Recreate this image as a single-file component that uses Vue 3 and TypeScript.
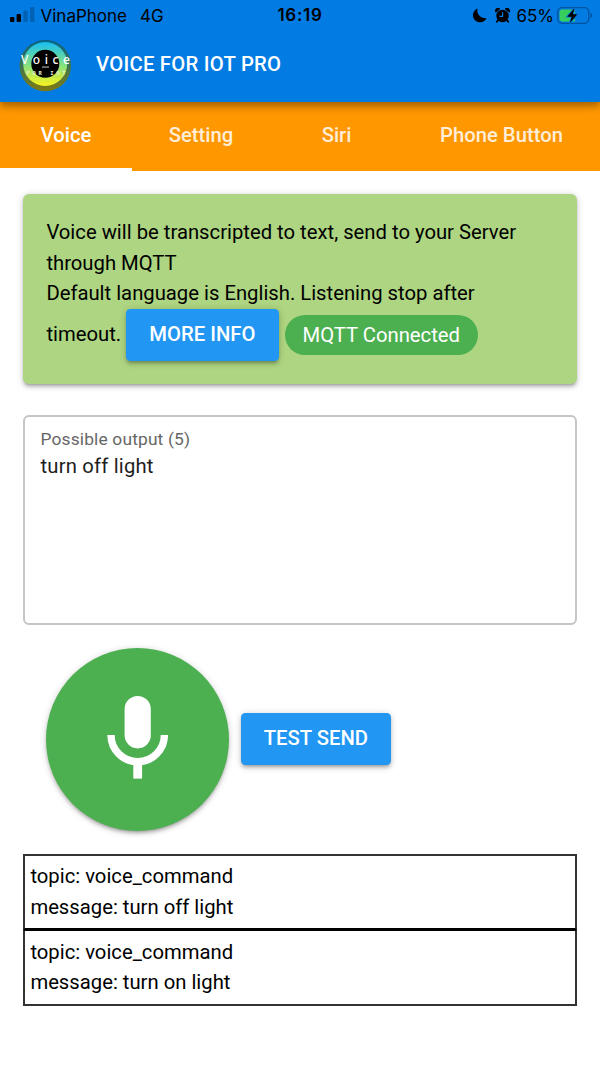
<script setup lang="ts">
import { ref } from 'vue'

interface Tab { id: string; label: string }
interface Message { topic: string; message: string }

const tabs: Tab[] = [
  { id: 'voice', label: 'Voice' },
  { id: 'setting', label: 'Setting' },
  { id: 'siri', label: 'Siri' },
  { id: 'phone', label: 'Phone Button' },
]
const active = ref('voice')
const output = ref('turn off light')
const messages: Message[] = [
  { topic: 'voice_command', message: 'turn off light' },
  { topic: 'voice_command', message: 'turn on light' },
]
</script>

<template>
  <div class="app">
    <header class="header">
      <div class="status">
        <div class="status-left">
          <svg class="signal" width="25" height="16" viewBox="0 0 25 16">
            <rect x="0" y="10" width="4.4" height="5" rx="1" />
            <rect x="6.6" y="7" width="4.4" height="8" rx="1" />
            <rect x="13.3" y="3.4" width="4.4" height="11.6" rx="1" opacity="0.2" />
            <rect x="20" y="0" width="4.4" height="15" rx="1" opacity="0.2" />
          </svg>
          <span class="carrier">VinaPhone</span>
          <span class="network">4G</span>
        </div>
        <span class="clock">16:19</span>
        <div class="status-right">
          <svg class="moon" width="14" height="15" viewBox="0 0 14 15">
            <path d="M4.6 0.6A7.1 7.1 0 1 0 13.6 10A7.6 7.6 0 0 1 4.6 0.6Z" />
          </svg>
          <svg class="alarm" width="15" height="15" viewBox="0 0 15 15">
            <path d="M0.8 4.2A2.6 2.6 0 0 1 4.8 0.9ZM14.2 4.2A2.6 2.6 0 0 0 10.2 0.9Z" stroke="#000" stroke-width="0.8" />
            <circle cx="7.5" cy="8" r="6.2" />
            <path d="M3.2 12L1.8 13.8M11.8 12L13.2 13.8" stroke="#000" stroke-width="1.8" stroke-linecap="round" />
            <path d="M7.6 4.2V8.3H4.4" fill="none" stroke="#067be4" stroke-width="1.2" />
          </svg>
          <span class="percent">65%</span>
          <svg class="battery" width="36" height="17" viewBox="0 0 36 17">
            <rect x="0.7" y="0.7" width="31" height="15.6" rx="4.2" fill="none" stroke="#00549f" stroke-width="1.3" />
            <path d="M33.4 5.8C35.7 6.5 35.7 10.5 33.4 11.2Z" fill="#00549f" />
            <path d="M5 2.6H18V14.4H5A2.4 2.4 0 0 1 2.6 12V5A2.4 2.4 0 0 1 5 2.6Z" fill="#36ce5c" />
            <path d="M17.6 1L10.2 9.7H14.7L12.8 16L20.4 7.3H15.8Z" stroke="#067be4" stroke-width="1.8" paint-order="stroke" />
          </svg>
        </div>
      </div>
      <div class="toolbar">
        <svg class="logo" width="54" height="54" viewBox="0 0 54 54">
          <defs>
            <linearGradient id="rim" x1="0" y1="0" x2="0" y2="1">
              <stop offset="0" stop-color="#076487" />
              <stop offset="0.5" stop-color="#3c7654" />
              <stop offset="1" stop-color="#807a10" />
            </linearGradient>
            <linearGradient id="ring" x1="0" y1="0" x2="0" y2="1">
              <stop offset="0" stop-color="#17bff2" />
              <stop offset="0.5" stop-color="#7fe087" />
              <stop offset="1" stop-color="#faf41d" />
            </linearGradient>
          </defs>
          <circle cx="27.3" cy="27.5" r="25.8" fill="url(#rim)" />
          <circle cx="27.2" cy="26" r="22" fill="url(#ring)" />
          <circle cx="27.3" cy="25.8" r="14" fill="#000" />
          <text class="logo-name" x="3" y="26" textLength="49">Voice</text>
          <rect x="24" y="28.6" width="7" height="0.9" fill="#ddd" />
          <text class="logo-sub" x="8.5" y="36.8" textLength="39" xml:space="preserve">FOR IOT</text>
        </svg>
        <h1 class="title">VOICE FOR IOT PRO</h1>
      </div>
    </header>

    <nav class="tabs">
      <button
        v-for="t in tabs"
        :key="t.id"
        class="tab"
        :class="[t.id, { active: active === t.id }]"
        @click="active = t.id"
      >{{ t.label }}</button>
    </nav>

    <main class="page">
      <section class="card">
        Voice will be transcripted to text, send to your Server<br />through MQTT<br />
        Default language is English. Listening stop after<br />
        <div class="card-row">
          <span class="timeout">timeout.</span>
          <button class="btn info">MORE INFO</button>
          <span class="badge">MQTT Connected</span>
        </div>
      </section>

      <label class="field">
        <span class="field-label">Possible output (5)</span>
        <textarea v-model="output" class="field-input" spellcheck="false"></textarea>
      </label>

      <div class="actions">
        <button class="mic" aria-label="Record">
          <svg width="62" height="84" viewBox="0 0 62 84">
            <rect x="17.6" y="1" width="26.2" height="52.4" rx="13.1" fill="#fff" />
            <path d="M4 40A26.7 26.7 0 0 0 57.4 40" fill="none" stroke="#fff" stroke-width="7.4" />
            <rect x="26.3" y="66" width="8.8" height="17.6" fill="#fff" />
          </svg>
        </button>
        <button class="btn send">TEST SEND</button>
      </div>

      <div class="log">
        <div v-for="(m, i) in messages" :key="i" class="entry">
          <div>topic: {{ m.topic }}</div>
          <div>message: {{ m.message }}</div>
        </div>
      </div>
    </main>
  </div>
</template>

<style>
body { margin: 0; background: #fff; }
</style>

<style scoped>
.app {
  width: 600px;
  height: 1067px;
  overflow: hidden;
  background: #fff;
  color: #000;
  font-family: Roboto, sans-serif;
  font-size: 20.26px;
  line-height: 30.43px;
}
button { border: 0; margin: 0; padding: 0; font: inherit; color: inherit; background: none; }
.header {
  position: relative;
  z-index: 1;
  height: 101.5px;
  background: #027be3;
  box-shadow: 0 3px 6px -1px rgba(0, 0, 0, 0.2), 0 6px 7px rgba(0, 0, 0, 0.14), 0 1px 14px rgba(0, 0, 0, 0.12);
}
.status {
  display: grid;
  grid-template-columns: 1fr auto 1fr;
  align-items: center;
  height: 30px;
  font-family: Inter, sans-serif;
  font-size: 17px;
  line-height: 30px;
}
.status-left { display: flex; align-items: center; padding-left: 10px; }
.signal { margin-top: 0; }
.carrier { margin: 1px 0 -1px 5.5px; }
.network { margin: 1px 0 -1px 13px; }
.clock { margin: 0; font-weight: 600; letter-spacing: 0.7px; }
.status-right { display: flex; align-items: center; justify-content: flex-end; padding-right: 7px; }
.alarm { margin-left: 8px; }
.percent { margin: 1px 0 -1px 6px; }
.battery { margin-left: 3px; }
.toolbar { display: flex; align-items: center; height: 70px; padding-left: 18px; }
.logo { display: block; }
.logo-name { font: 500 12px "Noto Sans", sans-serif; fill: #fff; }
.logo-sub { font: 700 5.5px "DejaVu Sans Mono", monospace; fill: #e8ecc8; }
.title {
  margin: -2px 0 0 24px;
  color: #fff;
  font-size: 20.29px;
  font-weight: 500;
  letter-spacing: 0.24px;
}
.tabs {
  display: grid;
  grid-template-columns: 132px 138px 133px 197px;
  height: 69.5px;
  background: #ff9800;
}
.tab {
  height: 69.5px;
  padding-top: 1px;
  border-bottom: 3px solid transparent;
  box-sizing: border-box;
  color: rgba(255, 255, 255, 0.85);
  font-weight: 500;
}
.tab.active { color: #fff; border-bottom-color: #fff; }
.page { padding: 23.2px; }
.card {
  box-sizing: border-box;
  height: 190px;
  padding: 23.2px;
  border-radius: 5.8px;
  background: #aed581;
  box-shadow: 0 1.5px 7px rgba(0, 0, 0, 0.2), 0 3px 3px rgba(0, 0, 0, 0.14), 0 4px 1.5px -3px rgba(0, 0, 0, 0.12);
  white-space: nowrap;
}
.card-row { display: flex; align-items: center; height: 52.2px; }
.timeout { margin-top: -2px; }
.btn {
  height: 52.2px;
  padding: 0 23.2px 2px;
  border-radius: 4.4px;
  background: #2196f3;
  color: #fff;
  font-weight: 500;
  box-shadow: 0 1.5px 7px rgba(0, 0, 0, 0.2), 0 3px 3px rgba(0, 0, 0, 0.14), 0 4px 1.5px -3px rgba(0, 0, 0, 0.12);
}
.info { margin-left: 5px; }
.badge {
  margin-left: 6px;
  height: 40px;
  line-height: 41px;
  padding: 0 18px;
  border-radius: 20px;
  background: #4caf50;
  color: #fff;
}
.field {
  display: flex;
  flex-direction: column;
  box-sizing: border-box;
  height: 210px;
  margin-top: 30.5px;
  padding: 7px 15.3px;
  border: 2px solid #c6c6c6;
  border-radius: 5.8px;
}
.field-label { color: #666; font-size: 17.4px; line-height: 30px; letter-spacing: 0.15px; }
.field-input {
  flex: 1;
  margin: -3px 0 0;
  padding: 0;
  border: 0;
  outline: 0;
  resize: none;
  background: none;
  color: #1d1d1d;
  font: inherit;
  letter-spacing: 0.19px;
}
.actions { display: flex; align-items: center; margin: 23px 0 0 23.2px; }
.mic {
  display: flex;
  align-items: center;
  justify-content: center;
  width: 183px;
  height: 183px;
  border-radius: 50%;
  background: #4caf50;
  box-shadow: 0 1.5px 7px rgba(0, 0, 0, 0.2), 0 3px 3px rgba(0, 0, 0, 0.14), 0 4px 1.5px -3px rgba(0, 0, 0, 0.12);
}
.mic svg { display: block; margin-top: -4px; }
.send { margin-left: 11.2px; }
.log { margin-top: 23.5px; }
.entry { padding: 5.2px 5.2px 6.2px; border: 2px solid #333; }
.entry + .entry { border-top: 1px solid #000; }
.entry:first-child { border-bottom-color: #000; }
</style>
